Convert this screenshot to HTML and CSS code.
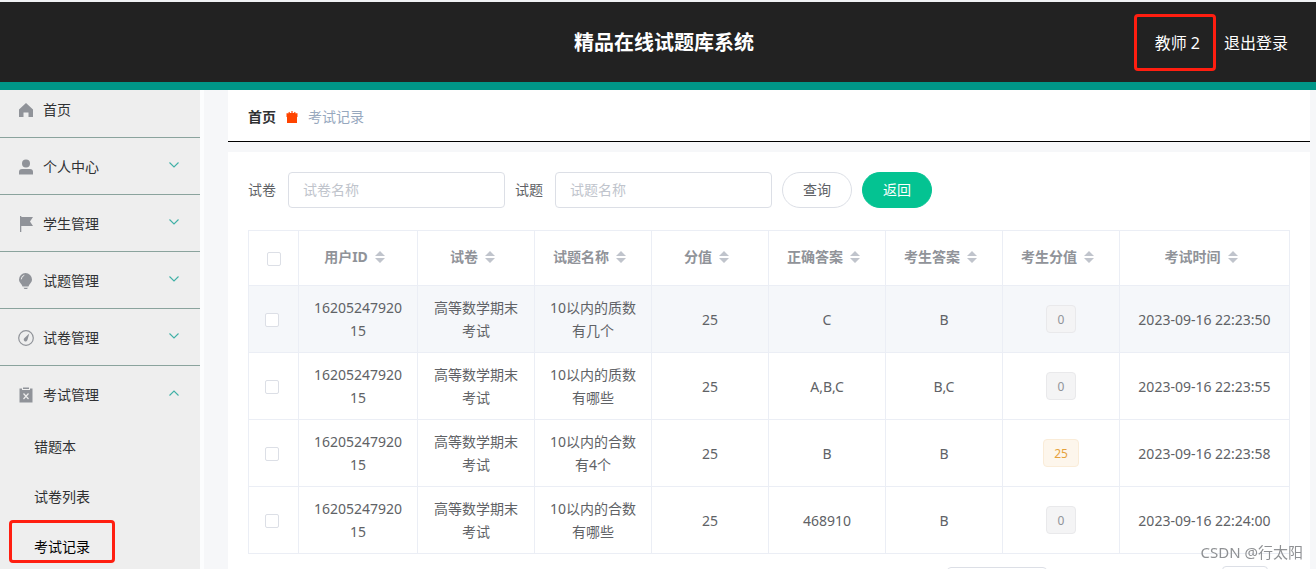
FILE: index.html
```html
<!DOCTYPE html>
<html lang="zh-CN">
<head>
<meta charset="utf-8">
<title>精品在线试题库系统</title>
<link rel="stylesheet" href="styles.css">
</head>
<body>
<svg class="defs" aria-hidden="true">
  <symbol id="down" viewBox="0 0 12 12"><path d="M1.500 3.500 6 8l4.500-4.500" fill="none" stroke="currentColor" stroke-width="1.100"/></symbol>
  <symbol id="sort" viewBox="0 0 10 12"><path d="M5 0 10 5H0zM0 7h10l-5 5z" fill="currentColor"/></symbol>
</svg>
<header class="topbar">
  <h1 class="title">精品在线试题库系统</h1>
  <nav class="account">
    <span class="user marked">教师 2</span>
    <a class="logout" href="#">退出登录</a>
  </nav>
</header>
<div class="layout">
  <nav class="sidebar">
    <a class="menu-item home" href="#">
      <svg class="menu-icon" viewBox="0 0 16 16"><path d="M8 1 15 7.500V15h-4.500v-4.500h-5V15H1V7.500z"/></svg>
      <span>首页</span>
    </a>
    <a class="menu-item" href="#">
      <svg class="menu-icon" viewBox="0 0 16 16"><circle cx="8" cy="4.500" r="4"/><path d="M1 15.500V13q0-3 3-3h8q3 0 3 3v2.500z"/></svg>
      <span>个人中心</span>
      <svg class="chevron"><use href="#down"/></svg>
    </a>
    <a class="menu-item" href="#">
      <svg class="menu-icon" viewBox="0 0 16 16"><path d="M2 0h1.300v1H15l-3 4.500 3 4.500H3.300v6H2z"/></svg>
      <span>学生管理</span>
      <svg class="chevron"><use href="#down"/></svg>
    </a>
    <a class="menu-item" href="#">
      <svg class="menu-icon" viewBox="0 0 16 16"><path d="M7.500 0A6.500 6.500 0 0 0 1 6.500c0 3 2.500 4 3.500 7h6c1-3 3.500-4 3.500-7A6.500 6.500 0 0 0 7.500 0zM5.500 14.700h4.500l-1 1.300H6.500z"/><path d="M3.300 6.300Q3.500 3 6.300 2.300" fill="none" stroke="#eee"/></svg>
      <span>试题管理</span>
      <svg class="chevron"><use href="#down"/></svg>
    </a>
    <a class="menu-item" href="#">
      <svg class="menu-icon" viewBox="0 0 16 16"><circle cx="8" cy="8" r="7.300" fill="none" stroke="currentColor" stroke-width="1.200"/><path d="M11.300 3.500 9.500 9.800A1.900 1.900 0 1 1 6.500 8z"/></svg>
      <span>试卷管理</span>
      <svg class="chevron"><use href="#down"/></svg>
    </a>
    <a class="menu-item open" href="#">
      <svg class="menu-icon" viewBox="0 0 16 16"><path d="M5 .500h6V2H5zM1.500 1.500H4V3h8V1.500h2.500v14h-13z"/><path d="m5.500 6.500 5 5.500m0-5.500-5 5.500" stroke="#eee" stroke-width="1.200"/></svg>
      <span>考试管理</span>
      <svg class="chevron up"><use href="#down"/></svg>
    </a>
    <a class="sub-item" href="#"><span>错题本</span></a>
    <a class="sub-item" href="#"><span>试卷列表</span></a>
    <a class="sub-item active" href="#"><span class="marked">考试记录</span></a>
  </nav>
  <main class="content">
    <nav class="breadcrumb">
      <a class="crumb-home" href="#">首页</a>
      <svg class="crumb-icon" viewBox="0 0 12 12"><path d="M5.400 0h1.200v2h1.200l1-1.200.800.700-.400.800H11.500V6H11v6H1V6H.500V2.300h2.300l-.400-.800.800-.700 1 1.200h1.200z"/></svg>
      <span class="crumb-current">考试记录</span>
    </nav>
    <section class="panel">
      <form class="search">
        <label for="paper">试卷</label>
        <input class="field" id="paper" type="text" placeholder="试卷名称">
        <label for="question">试题</label>
        <input class="field" id="question" type="text" placeholder="试题名称">
        <button class="btn" type="button">查询</button>
        <button class="btn primary" type="button">返回</button>
      </form>
      <table class="records">
        <colgroup><col class="c-check"><col class="c-id"><col class="c-std"><col class="c-std"><col class="c-std"><col class="c-std"><col class="c-std"><col class="c-std"><col></colgroup>
        <thead>
          <tr>
            <th class="check"><input type="checkbox" aria-label="全选"></th>
            <th>用户ID<svg class="sort"><use href="#sort"/></svg></th>
            <th>试卷<svg class="sort"><use href="#sort"/></svg></th>
            <th>试题名称<svg class="sort"><use href="#sort"/></svg></th>
            <th>分值<svg class="sort"><use href="#sort"/></svg></th>
            <th>正确答案<svg class="sort"><use href="#sort"/></svg></th>
            <th>考生答案<svg class="sort"><use href="#sort"/></svg></th>
            <th>考生分值<svg class="sort"><use href="#sort"/></svg></th>
            <th>考试时间<svg class="sort"><use href="#sort"/></svg></th>
          </tr>
        </thead>
        <tbody>
          <tr class="hover"><td class="check"><input type="checkbox" aria-label="选择第1行"></td><td>1620524792015</td><td>高等数学期末考试</td><td>10以内的质数有几个</td><td>25</td><td>C</td><td>B</td><td><span class="tag">0</span></td><td>2023-09-16 22:23:50</td></tr>
          <tr><td class="check"><input type="checkbox" aria-label="选择第2行"></td><td>1620524792015</td><td>高等数学期末考试</td><td>10以内的质数有哪些</td><td>25</td><td>A,B,C</td><td>B,C</td><td><span class="tag">0</span></td><td>2023-09-16 22:23:55</td></tr>
          <tr><td class="check"><input type="checkbox" aria-label="选择第3行"></td><td>1620524792015</td><td>高等数学期末考试</td><td>10以内的合数有4个</td><td>25</td><td>B</td><td>B</td><td><span class="tag warning">25</span></td><td>2023-09-16 22:23:58</td></tr>
          <tr><td class="check"><input type="checkbox" aria-label="选择第4行"></td><td>1620524792015</td><td>高等数学期末考试</td><td>10以内的合数有哪些</td><td>25</td><td>468910</td><td>B</td><td><span class="tag">0</span></td><td>2023-09-16 22:24:00</td></tr>
        </tbody>
      </table>
      <div class="pager">
        <select class="page-size" aria-label="每页条数"></select>
        <input class="page-jump" type="text" aria-label="页码">
      </div>
    </section>
  </main>
</div>
<div class="watermark">CSDN @行太阳</div>
</body>
</html>
```

FILE: styles.css
```css
* { box-sizing: border-box; }

body {
  margin: 0;
  height: 100vh;
  overflow: hidden;
  display: flex;
  flex-direction: column;
  background: #fcfdfe;
  color: #606266;
  font: 14px/20px "Noto Sans", "Noto Sans CJK SC", sans-serif;
}

a { color: inherit; text-decoration: none; }
button, input, select { font: inherit; }
.defs { position: absolute; width: 0; height: 0; }

.topbar {
  flex: none;
  display: grid;
  grid-template-columns: 1fr auto 1fr;
  align-items: center;
  height: 90px;
  padding: 2px 28px 0 40px;
  border-top: 2px solid #f0f2f4;
  border-bottom: 8px solid #009688;
  background: #222;
  color: #fff;
}
.title { grid-column: 2; margin: 0; font-size: 20px; line-height: 28px; }
.account {
  display: flex;
  justify-content: flex-end;
  gap: 24px;
  font-size: 16px;
  line-height: 24px;
}

.marked { position: relative; }
.marked::after {
  content: "";
  position: absolute;
  border: 3px solid #ff1e10;
  border-radius: 4px;
}
.user::after { inset: -17px -16px -16px -21px; }
.sub-item .marked::after { inset: -17px -25px -6px -25px; }

.layout { flex: 1; min-height: 0; display: flex; gap: 4px; }

.sidebar { flex: none; width: 200px; overflow: hidden; background: #eee; color: #303133; }
.menu-item {
  display: flex;
  align-items: center;
  gap: 9px;
  height: 57px;
  padding: 2px 20px 0 18px;
  border-bottom: 1px solid #8aa39d;
}
.menu-item.home { height: 48px; padding-top: 0; padding-bottom: 8px; }
.menu-item.open { border-bottom-color: transparent; }
.menu-icon { flex: none; width: 16px; height: 16px; color: #909399; fill: #909399; }
.chevron { width: 12px; height: 12px; margin: 0 0 4px auto; color: #3fb0a6; }
.chevron.up { transform: scaleY(-1); }
.sub-item { display: flex; align-items: center; height: 50px; padding-bottom: 2px; padding-left: 34px; }
.sub-item.active { color: #000; }

.content {
  flex: 1;
  min-width: 0;
  display: flex;
  flex-direction: column;
  gap: 10px;
  overflow: hidden;
  padding-right: 6px;
  padding-left: 24px;
  background: #f6f7f9;
}
.breadcrumb {
  flex: none;
  display: flex;
  align-items: center;
  height: 52px;
  padding: 2px 20px 0;
  background: #fff;
  border-bottom: 1px solid #000;
}
.crumb-home { color: #303133; font-weight: 700; }
.crumb-icon { width: 12px; height: 12px; margin: 0 10px; fill: #ff4400; }
.crumb-current { color: #97a8be; }

.panel { flex: 1; padding: 20px 20px 0; background: #fff; }
.search { display: flex; align-items: center; gap: 10px; margin-bottom: 22px; }
.field {
  width: 217px;
  height: 36px;
  margin-left: 2px;
  padding: 0 14px 2px;
  border: 1px solid #dcdfe6;
  border-radius: 4px;
}
.field::placeholder { color: #c0c4cc; }
.btn {
  width: 70px;
  height: 36px;
  padding: 0;
  border: 1px solid #dcdfe6;
  border-radius: 18px;
  background: #fff;
  color: #606266;
}
.btn.primary { border-color: #04c392; background: #04c392; color: #fff; }

.records { width: 100%; table-layout: fixed; border-collapse: collapse; text-align: center; }
.c-check { width: 50px; }
.c-id { width: 119px; }
.c-std { width: 117px; }
.records th, .records td {
  padding: 0 13px;
  border: 1px solid #ebeef5;
  line-height: 23px;
  word-break: break-all;
}
.records th { height: 55px; padding: 0 12px 4px 5px; color: #909399; }
.records td { height: 67px; }
.records .check { padding: 2px 0 0 16px; text-align: left; }
.records th.check { padding: 2px 0 0 18px; }
.check input {
  display: block;
  appearance: none;
  width: 14px;
  height: 14px;
  margin: 0;
  border: 1px solid #dcdfe6;
  border-radius: 2px;
  background: #fff;
}
.sort { width: 10px; height: 12px; margin-left: 7px; vertical-align: -1px; color: #c0c4cc; }
.hover { background: #f5f7fa; }
.tag {
  display: inline-block;
  min-width: 30px;
  height: 28px;
  padding: 0 10px;
  border: 1px solid #e9e9eb;
  border-radius: 4px;
  background: #f4f4f5;
  color: #909399;
  font-size: 12px;
  line-height: 27px;
  vertical-align: middle;
}
.tag.warning { border-color: #faecd8; background: #fdf6ec; color: #e6a23c; }

.pager {
  display: flex;
  justify-content: flex-end;
  align-items: center;
  gap: 175px;
  margin-top: 12px;
  padding-right: 22px;
}
.page-size, .page-jump { border: 1px solid #dcdfe6; border-radius: 4px; background: #fff; }
.page-size { appearance: none; width: 100px; height: 28px; }
.page-jump { width: 46px; height: 30px; }

.watermark {
  position: fixed;
  right: 13px;
  bottom: 7px;
  color: #8f9194;
  font-size: 15px;
}
```
